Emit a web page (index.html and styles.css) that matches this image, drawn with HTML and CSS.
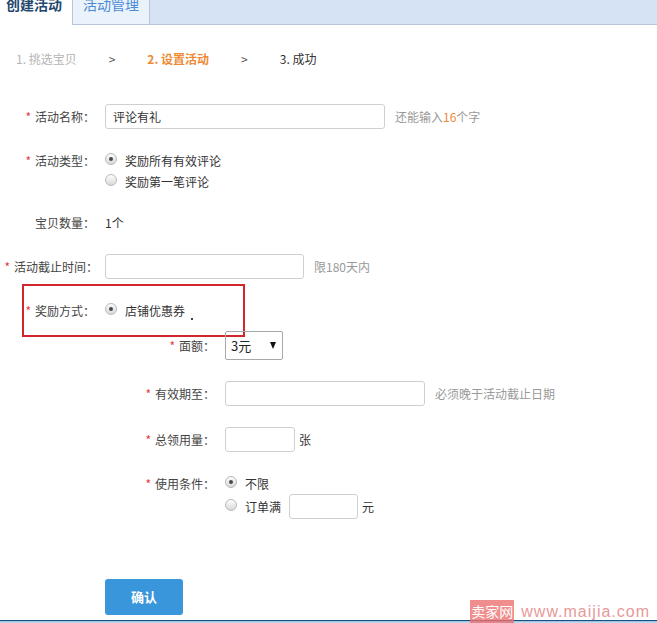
FILE: index.html
```html
<!DOCTYPE html>
<html>
	<head>
		<meta charset="UTF-8">
		<title>创建活动</title>
		<link rel="stylesheet" href="styles.css">
	</head>
	<body>
		<div class="page">
			<div class="tabs">
				<div class="tab active">创建活动</div>
				<div class="tab">活动管理</div>
			</div>

			<div class="steps">
				<span class="done">1. 挑选宝贝</span>
				<span class="arrow">&gt;</span>
				<span class="cur">2. 设置活动</span>
				<span class="arrow">&gt;</span>
				<span>3. 成功</span>
			</div>

			<div class="form">
				<div class="row r1">
					<label><i>*</i>活动名称：</label>
					<div class="field">
						<input class="txt w280" type="text" value="评论有礼">
						<span class="tip">还能输入<em>16</em>个字</span>
					</div>
				</div>
				<div class="row r2 top">
					<label><i>*</i>活动类型：</label>
					<div>
						<div class="radio on"><b></b>奖励所有有效评论</div>
						<div class="radio"><b></b>奖励第一笔评论</div>
					</div>
				</div>
				<div class="row r3">
					<label>宝贝数量：</label>
					<div>1个</div>
				</div>
				<div class="row r4">
					<label><i>*</i>活动截止时间：</label>
					<div class="field">
						<input class="txt w199" type="text">
						<span class="tip">限180天内</span>
					</div>
				</div>
				<div class="row r5">
					<label><i>*</i>奖励方式：</label>
					<div class="radio on"><b></b>店铺优惠券<span class="dot"></span></div>
					<div class="mark-box"></div>
				</div>
				<div class="row sub r6">
					<label><i>*</i>面额：</label>
					<div class="select"><span>3元</span><span class="caret"></span></div>
				</div>
				<div class="row sub r7">
					<label><i>*</i>有效期至：</label>
					<div class="field">
						<input class="txt w200" type="text">
						<span class="tip">必须晚于活动截止日期</span>
					</div>
				</div>
				<div class="row sub r8">
					<label><i>*</i>总领用量：</label>
					<div class="field">
						<input class="txt w70" type="text">
						<span class="unit">张</span>
					</div>
				</div>
				<div class="row sub r9 top">
					<label><i>*</i>使用条件：</label>
					<div>
						<div class="radio on"><b></b>不限</div>
						<div class="radio tall"><b></b>订单满<input class="txt w69" type="text"><span class="unit">元</span></div>
					</div>
				</div>
			</div>

			<button class="btn" type="button">确认</button>
			<div class="bar"></div>

			<div class="mark"><b>卖家网</b><span>www.maijia.com</span></div>
		</div>
	</body>
</html>
```

FILE: styles.css
```css
* {margin: 0;padding: 0;box-sizing: border-box;}
body {font: 12px/21px "Noto Sans CJK SC", "Microsoft YaHei", sans-serif;color: #333;background: #fff;}
.page {position: relative;width: 657px;height: 623px;overflow: hidden;}

.tabs {display: flex;height: 25px;background: #d5e3f4;border-bottom: 1px solid #b7c6d8;}
.tab {height: 24px;padding: 0 10px;font-size: 14px;line-height: 8px;color: #4a8ad4;background: #eaf2fc;border-left: 1px solid #b7c6d8;border-right: 1px solid #b7c6d8;}
.tab.active {width: 72px;height: 25px;padding-left: 6px;margin-bottom: -1px;border: 0;background: #fff;color: #23476e;font-weight: bold;}

.steps {display: flex;gap: 32px;padding-left: 16px;margin-top: 24px;line-height: 20px;}
.steps .done {color: #b5b5b5;}
.steps .arrow {color: #555;}
.steps .cur {color: #ee8a33;font-weight: bold;}

.row {position: relative;display: grid;grid-template-columns: 95px 1fr;column-gap: 10px;align-items: center;margin-top: 21px;}
.row.top {align-items: start;}
.row > label {text-align: right;white-space: nowrap;color: #444;}
.row label i {font-style: normal;color: #e4393c;margin-right: 4px;}
.sub {margin-left: 120px;}
.r1 {margin-top: 35px;}
.r3 {margin-top: 20px;}
.r4 label {margin-right: -3px;}
.r6 {margin-top: 10px;}

.field {display: flex;align-items: center;}
.txt {height: 25px;border: 1px solid #cfcfcf;border-radius: 3px;padding: 0 7px;font: inherit;color: #333;outline: none;}
.w280 {width: 280px;}
.w199 {width: 199px;}
.w200 {width: 200px;}
.w70 {width: 70px;}
.w69 {width: 69px;margin-left: 8px;}
.tip {margin-left: 10px;color: #999;}
.tip em {font-style: normal;color: #ee8a33;}
.unit {margin-left: 4px;}

.radio {display: flex;align-items: center;height: 21px;}
.radio.tall {height: 25px;}
.radio b {position: relative;display: block;width: 12px;height: 12px;margin: -3px 8px 0 0;border: 1px solid #b9b9b9;border-radius: 50%;background: linear-gradient(#fdfdfd, #d9d9d9);}
.radio.on b::after {content: "";position: absolute;left: 3px;top: 3px;width: 4px;height: 4px;border-radius: 50%;background: #4a4a4a;}
.dot {display: block;width: 2px;height: 2px;margin: 16px 0 0 6px;background: #444;}

.mark-box {position: absolute;left: 22px;top: -16px;width: 223px;height: 53px;border: 2px solid #d3262c;}

.select {display: flex;align-items: center;justify-content: space-between;width: 58px;height: 29px;padding: 0 6px 0 5px;border: 1px solid #a8a8a8;border-radius: 2px;font-size: 13px;color: #222;}
.select .caret {width: 0;height: 0;border-left: 3.5px solid transparent;border-right: 3.5px solid transparent;border-top: 7px solid #111;}

.btn {display: block;width: 78px;height: 36px;margin: 60px 0 0 105px;border: 0;border-radius: 3px;background: #3a96da;color: #fff;font: bold 13px/36px "Noto Sans CJK SC", sans-serif;}
.bar {height: 3px;margin-top: 5px;border-top: 1px solid #1d4f7f;background: linear-gradient(#8cb8dc, #cfe2f2);}

.mark {position: absolute;right: 7px;bottom: 0;display: flex;align-items: center;height: 23px;}
.mark b {width: 44px;height: 23px;background: rgba(236, 112, 112, 0.8);color: #fff;font: 14px/23px "Noto Sans CJK SC", sans-serif;text-align: center;}
.mark span {margin-left: 7px;color: #e79a9a;font: 16px/23px "Liberation Sans", sans-serif;letter-spacing: 1px;}
```
